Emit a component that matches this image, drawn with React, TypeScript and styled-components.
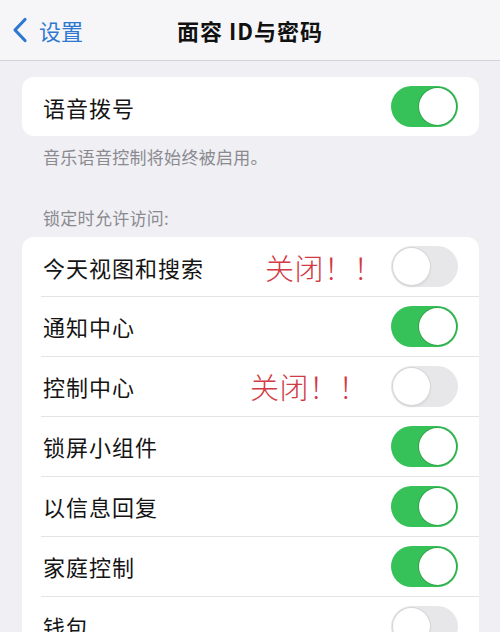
import React from 'react';
import styled, {createGlobalStyle} from 'styled-components';

const GlobalStyle = createGlobalStyle`
	html, body {
		margin: 0;
		padding: 0;
		background: #efeff4;
	}
	body {
		font-family: "Noto Sans CJK SC", "Noto Sans", sans-serif;
		-webkit-font-smoothing: antialiased;
	}
`;

const Screen = styled.div`
	width: 500px;
	height: 632px;
	overflow: hidden;
	background: #efeff4;
`;

const NavBar = styled.header`
	position: relative;
	display: flex;
	align-items: center;
	height: 60px;
	padding: 0 12px;
	background: #f6f6f8;
	border-bottom: 1px solid #d3d3d7;
`;

const BackButton = styled.div`
	display: flex;
	align-items: center;
	gap: 11px;
	color: #2f78d0;
	font-size: 22px;
	line-height: 1;
	svg {
		display: block;
	}
`;

const Title = styled.h1`
	position: absolute;
	left: 0;
	right: 0;
	margin: 0;
	text-align: center;
	font-size: 22px;
	font-weight: 600;
	color: #111;
	letter-spacing: 1px;
	pointer-events: none;
`;

const Content = styled.main`
	padding: 16px 21px 0 22px;
`;

const Group = styled.section`
	background: #fff;
	border-radius: 12px;
	overflow: hidden;
`;

const Row = styled.div<{$first?: boolean}>`
	display: flex;
	align-items: center;
	height: 59px;
	padding: 0 21px 0 21px;
	position: relative;
	${p => !p.$first && `
		&::before {
			content: '';
			position: absolute;
			top: 0;
			left: 19px;
			right: 0;
			height: 1px;
			background: #e4e4e7;
		}
		height: 60px;
	`}
`;

const Label = styled.span`
	font-size: 22px;
	color: #141414;
	letter-spacing: 1px;
`;

const Note = styled.span<{$gap: number}>`
	margin-left: auto;
	margin-right: ${p => p.$gap}px;
	font-size: 29px;
	font-weight: 300;
	color: #d23a45;
	letter-spacing: 0.5px;
`;

const Switch = styled.span<{$on: boolean}>`
	position: relative;
	flex: none;
	margin-left: auto;
	width: 67px;
	height: 41px;
	border-radius: 21px;
	background: ${p => (p.$on ? '#36c259' : '#e7e7e9')};
	&::after {
		content: '';
		position: absolute;
		top: 2px;
		left: ${p => (p.$on ? '28px' : '2px')};
		width: 37px;
		height: 37px;
		border-radius: 50%;
		background: #fff;
		box-shadow: ${p => (p.$on ? '0 0 0 1px rgba(40,140,60,0.5)' : '0 0 0 1px #d6d6d8, 0 2px 3px rgba(0,0,0,0.08)')};
	}
	${Note} + & {
		margin-left: 0;
	}
`;

const Footer = styled.p`
	margin: 0;
	padding: 10px 21px 0;
	font-size: 17px;
	line-height: 22px;
	color: #8a8a8f;
	letter-spacing: 0.3px;
`;

const SectionHeader = styled.p`
	margin: 0;
	padding: 39px 21px 8px;
	font-size: 17px;
	line-height: 22px;
	color: #8a8a8f;
	letter-spacing: 0.3px;
`;

type Item = {label: string; on: boolean; note?: number};

const lockItems: Item[] = [
	{label: '今天视图和搜索', on: false, note: 8},
	{label: '通知中心', on: true},
	{label: '控制中心', on: false, note: 23},
	{label: '锁屏小组件', on: true},
	{label: '以信息回复', on: true},
	{label: '家庭控制', on: true},
	{label: '钱包', on: false},
];

export default function App() {
	return (
		<Screen>
			<GlobalStyle />
			<NavBar>
				<BackButton>
					<svg width="16" height="26" viewBox="0 0 16 26" fill="none">
						<path d="M13 2.5L3 13l10 10.5" stroke="#2f78d0" strokeWidth="3.2" strokeLinecap="round" strokeLinejoin="round" />
					</svg>
					<span>设置</span>
				</BackButton>
				<Title>面容 ID与密码</Title>
			</NavBar>
			<Content>
				<Group>
					<Row $first>
						<Label>语音拨号</Label>
						<Switch $on />
					</Row>
				</Group>
				<Footer>音乐语音控制将始终被启用。</Footer>
				<SectionHeader>锁定时允许访问:</SectionHeader>
				<Group>
					{lockItems.map((item, i) => (
						<Row key={item.label} $first={i === 0}>
							<Label>{item.label}</Label>
							{item.note !== undefined && <Note $gap={item.note}>关闭！！</Note>}
							<Switch $on={item.on} />
						</Row>
					))}
				</Group>
			</Content>
		</Screen>
	);
}
